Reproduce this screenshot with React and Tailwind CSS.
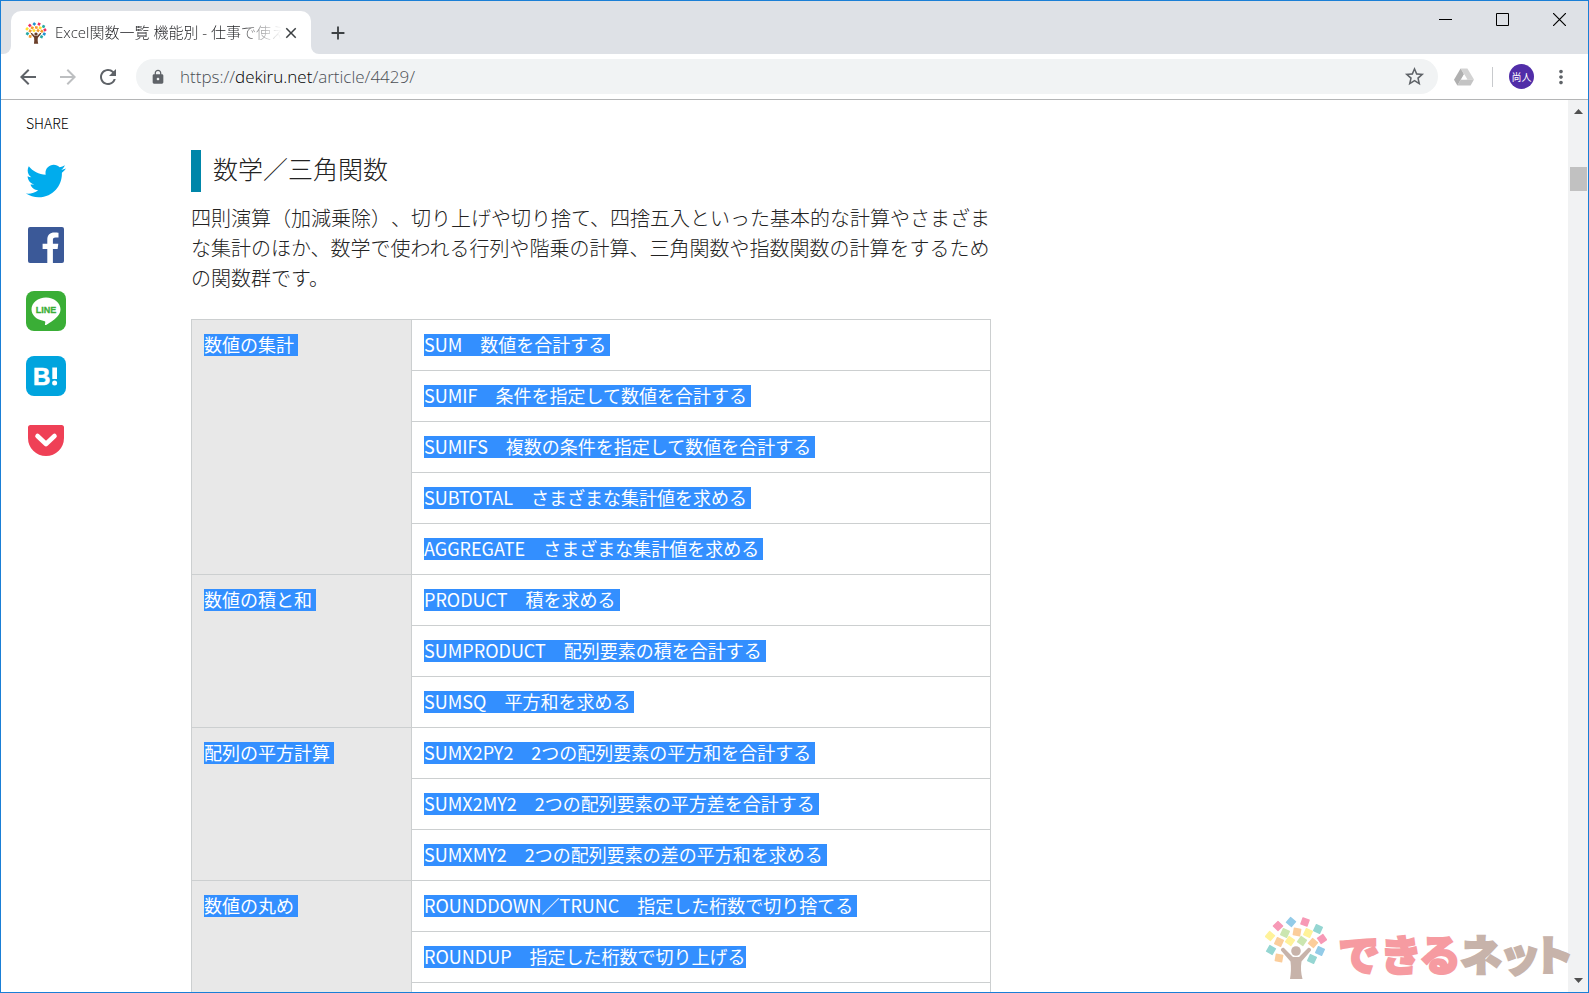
import { Fragment } from 'react';
import { MdArrowBack, MdArrowForward, MdRefresh, MdLock, MdStarBorder, MdMoreVert, MdAdd, MdClose } from 'react-icons/md';
import { FaTwitter } from 'react-icons/fa';

const FUNCTION_GROUPS = [
  {
    title: '数値の集計',
    items: [
      ['SUM', '数値を合計する'],
      ['SUMIF', '条件を指定して数値を合計する'],
      ['SUMIFS', '複数の条件を指定して数値を合計する'],
      ['SUBTOTAL', 'さまざまな集計値を求める'],
      ['AGGREGATE', 'さまざまな集計値を求める'],
    ],
  },
  {
    title: '数値の積と和',
    items: [
      ['PRODUCT', '積を求める'],
      ['SUMPRODUCT', '配列要素の積を合計する'],
      ['SUMSQ', '平方和を求める'],
    ],
  },
  {
    title: '配列の平方計算',
    items: [
      ['SUMX2PY2', '2つの配列要素の平方和を合計する'],
      ['SUMX2MY2', '2つの配列要素の平方差を合計する'],
      ['SUMXMY2', '2つの配列要素の差の平方和を求める'],
    ],
  },
  {
    title: '数値の丸め',
    items: [
      ['ROUNDDOWN／TRUNC', '指定した桁数で切り捨てる'],
      ['ROUNDUP', '指定した桁数で切り上げる'],
      null,
    ],
  },
];

// x, y, rotation, colour key
const LEAVES = [
  [42, 22, 40, 0], [56, 22, 20, 1], [29, 26, 45, 1], [69, 29, 25, 2],
  [21, 36, 40, 3], [36, 33, 25, 4], [48, 32, 10, 5], [59, 33, 25, 3],
  [73, 39, 55, 1], [30, 42, 25, 5], [41, 41, 35, 3], [53, 41, 35, 4],
  [64, 43, 40, 5], [22, 50, 30, 2], [71, 51, 25, 0], [30, 58, 10, 5], [63, 59, 25, 2],
];
const SOFT = ['#93cbe8', '#f799b6', '#95d6d2', '#fff29a', '#cbe6b0', '#fbcd9b'];
const VIVID = ['#1f92cf', '#ee2f62', '#27aaa4', '#ffe12f', '#f59a2c', '#f59a2c'];

const Tree = ({ className, palette, trunk }) => (
  <svg viewBox="16 16 62 64" className={className} aria-hidden="true">
    {LEAVES.map(([x, y, angle, tone]) => (
      <rect
        key={`${x}-${y}`}
        x={x - 3.9}
        y={y - 3.9}
        width="7.8"
        height="7.8"
        rx="0.6"
        fill={palette[tone]}
        transform={`rotate(${angle} ${x} ${y})`}
      />
    ))}
    <circle cx="47" cy="51" r="4.8" fill={trunk} />
    <path d="M32 50.500c-.8-1.500 1.500-3.700 3-2.500l9 9h6l9-9c1.500-1.200 3.800 1 3 2.500l-9.500 11c-1 6-.5 12 1 17.500H41c1-5.500 1.300-11.500.500-17.500z" fill={trunk} />
  </svg>
);

const FacebookIcon = () => (
  <svg viewBox="0 0 40 40" className="size-10" aria-hidden="true">
    <rect x="2" y="1" width="36" height="36" rx="2" fill="#3b5998" />
    <path d="M21.300 37V23h-4.700v-5.300h4.700v-4c0-4.700 2.900-7.200 7-7.200 2 0 3.700.15 4.200.2v4.900h-2.900c-2.300 0-2.700 1.100-2.700 2.700v3.400h5.400l-.7 5.300h-4.700v14z" fill="#fff" />
  </svg>
);

const LineIcon = () => (
  <svg viewBox="0 0 40 40" className="size-10" aria-hidden="true">
    <rect width="40" height="40" rx="8" fill="#3aae36" />
    <path d="M20 6.500c8 0 14.500 5.300 14.500 11.800 0 2.600-1 5-3.100 7.300-3 3.400-9.700 7.600-11.200 8.300-1.500.6-1.300-.4-1.200-.8l.2-1.200c.05-.4.100-.9-.05-1.300-.15-.4-.8-.6-1.200-.7C10.800 29.100 5.500 24.200 5.500 18.300 5.500 11.800 12 6.500 20 6.500z" fill="#fff" />
    <text x="20" y="22" textAnchor="middle" className="font-['Liberation_Sans',sans-serif] text-[9px] font-bold" fill="#3aae36" stroke="#3aae36" strokeWidth="0.300">LINE</text>
  </svg>
);

const HatenaIcon = () => (
  <svg viewBox="0 0 40 40" className="size-10" aria-hidden="true">
    <rect width="40" height="40" rx="8" fill="#00a4de" />
    <text x="7" y="29" className="font-['Liberation_Sans',sans-serif] text-[24px] font-bold" fill="#fff" stroke="#fff" strokeWidth="0.600">B</text>
    <path d="M26.300 11.500h4.700v11.500h-4.700z" fill="#fff" />
    <circle cx="28.600" cy="27" r="2.500" fill="#fff" />
  </svg>
);

const PocketIcon = () => (
  <svg viewBox="0 0 40 40" className="size-10" aria-hidden="true">
    <path d="M4.500 4h31A2.500 2.500 0 0 1 38 6.500V17a18 18 0 0 1-36 0V6.500A2.500 2.500 0 0 1 4.500 4z" fill="#ef4056" />
    <path d="M11.500 15l8.500 8 8.500-8" fill="none" stroke="#fff" strokeWidth="4.600" strokeLinecap="round" strokeLinejoin="round" />
  </svg>
);

const SHARE_LINKS = [
  { label: 'Twitter', icon: <FaTwitter className="size-10 text-[#00aced]" /> },
  { label: 'Facebook', icon: <FacebookIcon /> },
  { label: 'LINE', icon: <LineIcon /> },
  { label: 'Hatena', icon: <HatenaIcon /> },
  { label: 'Pocket', icon: <PocketIcon /> },
];

const DriveIcon = () => (
  <svg viewBox="0 0 20 18" className="h-[18px] w-5" aria-hidden="true">
    <path d="M6.600.500h6.800L20 11.500H13.500z" fill="#d3d3d3" />
    <path d="M6.600.500L0 11.800l3.400 5.700L10 6.200z" fill="#b0b0b0" />
    <path d="M6.800 11.500H20l-3.400 6H3.400z" fill="#c4c4c4" />
    <path d="M10 6.500l2.800 5H7.200z" fill="#fff" />
  </svg>
);

const TitleBar = () => (
  <div className="flex h-[53px] shrink-0 items-end justify-between bg-[#dee1e6]">
    <div className="flex items-end">
      <div className="h-2 w-[10px] bg-white">
        <div className="size-full rounded-br-lg bg-[#dee1e6]" />
      </div>
      <div className="flex h-[43px] w-[300px] items-center rounded-t-[10px] bg-white pr-[11px] pl-[14px]">
        <Tree className="size-[22px] shrink-0" palette={VIVID} trunk="#6b3f2a" />
        <span className="ml-2 flex-1 overflow-hidden bg-linear-to-r from-[#202124] from-80% to-transparent bg-clip-text font-['Open_Sans','Noto_Sans_CJK_JP',sans-serif] text-[15px] font-light whitespace-nowrap text-transparent">
          Excel関数一覧 機能別 - 仕事で使え
        </span>
        <button type="button" aria-label="Close tab" className="text-[#3c4043]">
          <MdClose size={18} />
        </button>
      </div>
      <div className="h-2 w-2 bg-white">
        <div className="size-full rounded-bl-lg bg-[#dee1e6]" />
      </div>
      <button type="button" aria-label="New tab" className="mb-[10px] ml-2 text-[#3c4043]">
        <MdAdd size={22} />
      </button>
    </div>
    <div className="flex self-start pt-3 pr-[22px] text-black">
      <button type="button" aria-label="Minimize" className="mr-11">
        <svg viewBox="0 0 13 13" className="size-[13px]"><path d="M0 6.500h13" stroke="currentColor" /></svg>
      </button>
      <button type="button" aria-label="Maximize" className="mr-11">
        <svg viewBox="0 0 13 13" className="size-[13px]"><path d="M.5.5h12v12H.5z" fill="none" stroke="currentColor" /></svg>
      </button>
      <button type="button" aria-label="Close">
        <svg viewBox="0 0 13 13" className="size-[13px]"><path d="M0 0l13 13M13 0L0 13" stroke="currentColor" strokeWidth="1.200" /></svg>
      </button>
    </div>
  </div>
);

const Toolbar = () => (
  <div className="flex h-[46px] shrink-0 items-center border-b border-[#b4b5b6] bg-white pr-4 pl-[15px] text-[#5f6368]">
    <button type="button" aria-label="Back"><MdArrowBack size={24} /></button>
    <button type="button" aria-label="Forward" className="ml-4 text-[#bdbfc1]"><MdArrowForward size={24} /></button>
    <button type="button" aria-label="Reload" className="ml-4"><MdRefresh size={24} /></button>
    <div className="ml-4 flex h-[35px] flex-1 items-center rounded-full bg-[#f1f3f4] pr-3 pl-[14px]">
      <MdLock size={16} />
      <a href="https://dekiru.net/article/4429/" className="ml-[14px] flex-1 font-['Open_Sans',sans-serif] text-[17px] font-light text-[#4b4f54]">
        https://<span className="text-black">dekiru.net</span>/article/4429/
      </a>
      <button type="button" aria-label="Bookmark"><MdStarBorder size={23} /></button>
    </div>
    <div className="ml-4"><DriveIcon /></div>
    <div className="ml-[18px] h-5 w-px bg-[#c8cacd]" />
    <button type="button" className="ml-4 size-[25px] rounded-full bg-[#512da8] font-['Noto_Sans_CJK_JP',sans-serif] text-[10px] text-white">
      尚人
    </button>
    <button type="button" aria-label="Menu" className="ml-4"><MdMoreVert size={22} /></button>
  </div>
);

const ShareBar = () => (
  <aside className="w-[190px] shrink-0 pt-[13px] pl-[25px]">
    <p className="text-sm font-light text-black">SHARE</p>
    <ul className="mt-7 flex flex-col gap-[25px]">
      {SHARE_LINKS.map(({ label, icon }) => (
        <li key={label}>
          <a href="#share" aria-label={label} className="block size-10">{icon}</a>
        </li>
      ))}
    </ul>
  </aside>
);

const Selected = ({ children, tail = true }) => (
  <span className="inline-block bg-[#338fff] pb-0.5 align-top text-lg leading-5 whitespace-pre text-white">
    {children}{tail && ' '}
  </span>
);

const FunctionTable = () => (
  <table className="w-full table-fixed border-collapse">
    <colgroup>
      <col className="w-[220px]" />
      <col />
    </colgroup>
    <tbody>
      {FUNCTION_GROUPS.map((group) => (
        <Fragment key={group.title}>
          {group.items.map((item, i) => (
            <tr key={item ? item[0] : 'next'} className="h-[51px]">
              {i === 0 && (
                <th rowSpan={group.items.length} scope="rowgroup" className="border border-[#cccfd0] bg-[#e8e8e8] px-3 py-[14px] text-left align-top leading-[22px] font-normal">
                  <Selected>{group.title}</Selected>
                </th>
              )}
              <td className="border border-[#cccfd0] px-3 py-[14px] align-top leading-[22px]">
                {item && <Selected tail={item[0] !== 'ROUNDUP'}>{`${item[0]}　${item[1]}`}</Selected>}
              </td>
            </tr>
          ))}
        </Fragment>
      ))}
    </tbody>
  </table>
);

const Article = () => (
  <main className="w-[800px] max-w-full pt-[50px]">
    <h2 className="border-l-10 border-[#0086a9] pb-1.5 pl-3 text-[25px] leading-9 font-light">数学／三角関数</h2>
    <p className="mt-[11px] mb-[26px] text-xl leading-[30px] font-light [text-spacing-trim:space-all]">
      四則演算（加減乗除）、切り上げや切り捨て、四捨五入といった基本的な計算やさまざまな集計のほか、数学で使われる行列や階乗の計算、三角関数や指数関数の計算をするための関数群です。
    </p>
    <FunctionTable />
  </main>
);

const Scrollbar = () => (
  <div className="flex w-5 shrink-0 flex-col items-center bg-[#f1f2f3] pt-[9px] pb-[9px]">
    <svg viewBox="0 0 9 5" className="h-[5px] w-[9px]"><path d="M4.500 0L9 5H0z" fill="#505050" /></svg>
    <div className="mt-[53px] h-6 w-[17px] bg-[#c1c1c1]" />
    <svg viewBox="0 0 9 5" className="mt-auto h-[5px] w-[9px]"><path d="M0 0h9L4.500 5z" fill="#505050" /></svg>
  </div>
);

const Watermark = () => (
  <div className="absolute right-[17px] bottom-3 flex items-end">
    <Tree className="h-16 w-[62px]" palette={SOFT} trunk="#c7b3aa" />
    <svg viewBox="0 0 234 50" className="ml-[10px] h-[50px] w-[234px] overflow-visible">
      <g className="font-['Noto_Sans_CJK_JP',sans-serif] text-[42px] font-black" strokeWidth="2">
        <text x="1 43 82" y="41" fill="#f69ba1" stroke="#f69ba1">できる</text>
        <text x="123 162 195" y="41" fill="#c7b3aa" stroke="#c7b3aa">ネット</text>
      </g>
    </svg>
  </div>
);

export default function App() {
  return (
    <div className="relative flex h-screen flex-col overflow-hidden border border-[#1a7fd6] bg-white font-['Noto_Sans_CJK_JP',sans-serif] text-[#222222]">
      <TitleBar />
      <Toolbar />
      <div className="flex min-h-0 flex-1">
        <div className="flex min-w-0 flex-1 overflow-hidden">
          <ShareBar />
          <Article />
        </div>
        <Scrollbar />
      </div>
      <Watermark />
    </div>
  );
}
